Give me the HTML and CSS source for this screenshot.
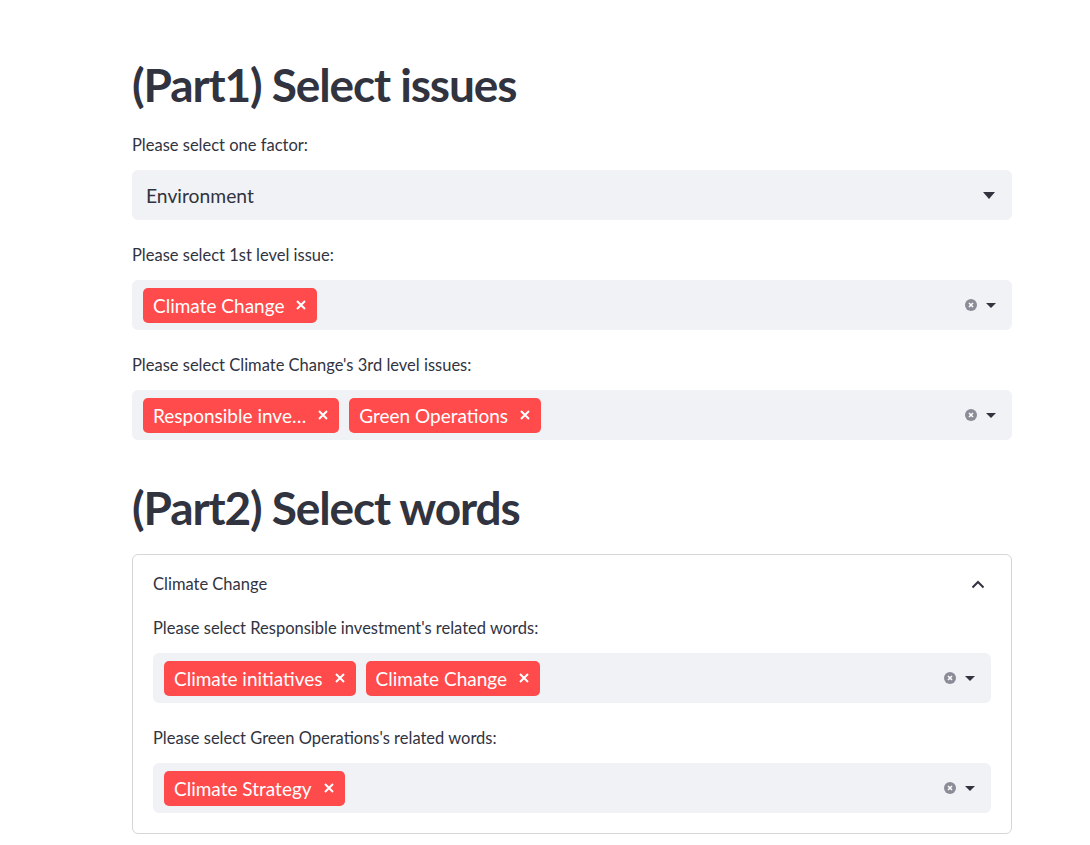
FILE: index.html
```html
<!DOCTYPE html>
<html>
<head>
<meta charset="utf-8">
<link rel="stylesheet" href="styles.css">
</head>
<body>
<main class="main">
  <h1 class="title">(Part1) Select issues</h1>
  <div class="field first">
    <div class="label">Please select one factor:</div>
    <div class="select single">
      <span class="value">Environment</span>
      <span class="icons"><svg class="caret" width="12" height="7" viewBox="0 0 12 7"><path d="M0 0h12L6 7z" fill="#31333f"/></svg></span>
    </div>
  </div>
  <div class="field">
    <div class="label">Please select 1st level issue:</div>
    <div class="select multi">
      <div class="tags">
        <span class="tag">Climate Change<svg class="x" width="10" height="10" viewBox="0 0 10 10"><path d="M1 1l8 8M9 1l-8 8" stroke="#fff" stroke-width="2"/></svg></span>
      </div>
      <span class="icons"><span class="clear"><svg width="12" height="12" viewBox="0 0 12 12"><circle cx="6" cy="6" r="6" fill="#8a8c97"/><path d="M4 4l4 4M8 4l-4 4" stroke="#fff" stroke-width="1.5"/></svg></span><svg class="caret" width="10" height="5" viewBox="0 0 10 5"><path d="M0 0h10L5 5z" fill="#31333f"/></svg></span>
    </div>
  </div>
  <div class="field">
    <div class="label">Please select Climate Change's 3rd level issues:</div>
    <div class="select multi">
      <div class="tags">
        <span class="tag">Responsible inve…<svg class="x" width="10" height="10" viewBox="0 0 10 10"><path d="M1 1l8 8M9 1l-8 8" stroke="#fff" stroke-width="2"/></svg></span>
        <span class="tag">Green Operations<svg class="x" width="10" height="10" viewBox="0 0 10 10"><path d="M1 1l8 8M9 1l-8 8" stroke="#fff" stroke-width="2"/></svg></span>
      </div>
      <span class="icons"><span class="clear"><svg width="12" height="12" viewBox="0 0 12 12"><circle cx="6" cy="6" r="6" fill="#8a8c97"/><path d="M4 4l4 4M8 4l-4 4" stroke="#fff" stroke-width="1.5"/></svg></span><svg class="caret" width="10" height="5" viewBox="0 0 10 5"><path d="M0 0h10L5 5z" fill="#31333f"/></svg></span>
    </div>
  </div>
  <h1 class="title second">(Part2) Select words</h1>
  <section class="expander">
    <div class="exp-head">
      <span>Climate Change</span>
      <svg class="chev" width="14" height="9" viewBox="0 0 14 9"><path d="M1.5 7.5L7 2l5.5 5.5" fill="none" stroke="#31333f" stroke-width="2"/></svg>
    </div>
    <div class="field first">
      <div class="label">Please select Responsible investment's related words:</div>
      <div class="select multi">
        <div class="tags">
          <span class="tag">Climate initiatives<svg class="x" width="10" height="10" viewBox="0 0 10 10"><path d="M1 1l8 8M9 1l-8 8" stroke="#fff" stroke-width="2"/></svg></span>
          <span class="tag">Climate Change<svg class="x" width="10" height="10" viewBox="0 0 10 10"><path d="M1 1l8 8M9 1l-8 8" stroke="#fff" stroke-width="2"/></svg></span>
        </div>
        <span class="icons"><span class="clear"><svg width="12" height="12" viewBox="0 0 12 12"><circle cx="6" cy="6" r="6" fill="#8a8c97"/><path d="M4 4l4 4M8 4l-4 4" stroke="#fff" stroke-width="1.5"/></svg></span><svg class="caret" width="10" height="5" viewBox="0 0 10 5"><path d="M0 0h10L5 5z" fill="#31333f"/></svg></span>
      </div>
    </div>
    <div class="field">
      <div class="label">Please select Green Operations's related words:</div>
      <div class="select multi">
        <div class="tags">
          <span class="tag">Climate Strategy<svg class="x" width="10" height="10" viewBox="0 0 10 10"><path d="M1 1l8 8M9 1l-8 8" stroke="#fff" stroke-width="2"/></svg></span>
        </div>
        <span class="icons"><span class="clear"><svg width="12" height="12" viewBox="0 0 12 12"><circle cx="6" cy="6" r="6" fill="#8a8c97"/><path d="M4 4l4 4M8 4l-4 4" stroke="#fff" stroke-width="1.5"/></svg></span><svg class="caret" width="10" height="5" viewBox="0 0 10 5"><path d="M0 0h10L5 5z" fill="#31333f"/></svg></span>
      </div>
    </div>
  </section>
</main>
</body>
</html>
```

FILE: styles.css
```css
html, body {
  margin: 0;
  padding: 0;
  background: #ffffff;
}
body {
  font-family: "Lato", "Source Sans Pro", sans-serif;
  color: #31333f;
}
.main {
  width: 880px;
  padding: 55px 0 0 132px;
  display: flex;
  flex-direction: column;
}
.title {
  margin: 0;
  font-size: 46px;
  line-height: 60px;
  font-weight: 700;
  color: #31333f;
  letter-spacing: -1.1px;
}
.second {
  margin-top: 38px;
}
.field {
  display: flex;
  flex-direction: column;
  margin-top: 24px;
}
.field.first {
  margin-top: 19px;
}
.label {
  font-size: 16.5px;
  line-height: 22px;
  margin-bottom: 14px;
}
.select {
  height: 50px;
  background: #f0f2f6;
  border-radius: 6px;
  display: flex;
  align-items: center;
  box-sizing: border-box;
}
.single {
  padding: 0 17px 0 14px;
}
.single .value {
  flex: 1;
  font-size: 19.3px;
}
.multi {
  padding: 0 16px 0 11px;
}
.tags {
  flex: 1;
  display: flex;
  gap: 10px;
  align-items: center;
}
.tag {
  display: inline-flex;
  align-items: center;
  height: 35px;
  padding: 0 11px 0 10px;
  background: #ff4b4b;
  color: #ffffff;
  border-radius: 5px;
  font-size: 19px;
  box-sizing: border-box;
}
.x {
  margin-left: 12px;
  display: block;
}
.icons {
  display: flex;
  align-items: center;
  gap: 9px;
}
.clear {
  display: flex;
}
.caret {
  display: block;
}
.expander {
  margin-top: 16px;
  border: 1px solid rgba(49, 51, 63, 0.2);
  border-radius: 6px;
  padding: 18px 20px 20px 20px;
  display: flex;
  flex-direction: column;
}
.exp-head {
  display: flex;
  justify-content: space-between;
  align-items: center;
  font-size: 16.5px;
  line-height: 22px;
  padding-right: 6px;
}
.expander .field.first {
  margin-top: 22px;
}
```
